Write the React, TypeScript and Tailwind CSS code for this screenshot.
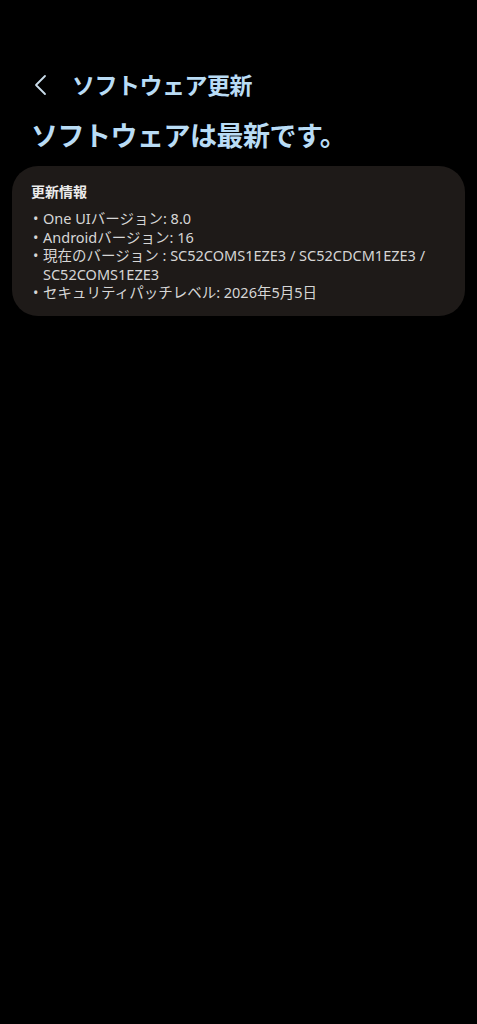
import React from "react";

const font = { fontFamily: '"Noto Sans", "Noto Sans CJK JP", sans-serif' };

export default function App() {
  const items = [
    "One UIバージョン: 8.0",
    "Androidバージョン: 16",
    "現在のバージョン : SC52COMS1EZE3 / SC52CDCM1EZE3 / SC52COMS1EZE3",
    "セキュリティパッチレベル: 2026年5月5日",
  ];
  return (
    <div className="min-h-[1024px] w-full bg-black" style={font}>
      <div className="flex items-center pt-[70px] pl-[32px] h-[100px]">
        <svg width="16" height="22" viewBox="0 0 16 22" className="shrink-0">
          <path d="M13 2 L4 11 L13 20" fill="none" stroke="#c9dceb" strokeWidth="1.8" strokeLinecap="round" strokeLinejoin="round" />
        </svg>
        <div className="ml-[24px] text-[23px] font-bold leading-none text-[#b9dcf5] tracking-[-0.5px]">ソフトウェア更新</div>
      </div>
      <div className="pl-[31px] pt-[22px] text-[27px] font-bold leading-none text-[#b9dcf5] tracking-[-0.5px]">ソフトウェアは最新です。</div>
      <div className="mx-3 mt-[17px] rounded-[26px] bg-[#1e1a18] pl-[19px] pr-[14px] pt-[16px] pb-[14px]">
        <div className="text-[14px] font-bold leading-[20px] text-[#ececec]">更新情報</div>
        <ul className="mt-[7px] text-[14.5px] leading-[18.5px] text-[#d6d6d6]">
          {items.map((t, i) => (
            <li key={i} className="flex">
              <span className="w-[12px] shrink-0 pl-[2px]">•</span>
              <span>{t}</span>
            </li>
          ))}
        </ul>
      </div>
    </div>
  );
}
